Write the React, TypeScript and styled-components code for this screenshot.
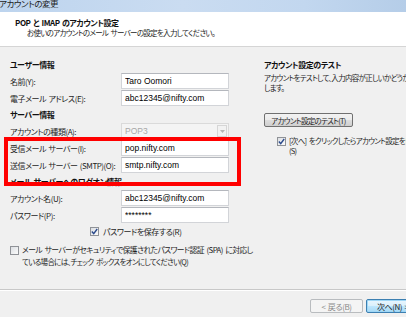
import styled, { createGlobalStyle, css } from 'styled-components';

const GlobalStyle = createGlobalStyle`
  html, body {
    margin: 0;
    padding: 0;
    background: #f0f0f0;
  }
  body {
    font-family: "Noto Sans CJK JP", "Liberation Sans", sans-serif;
  }
`;

// kana-heavy running text is narrower in the original UI font
const narrow = css`
  font-size: 7.5px;
  letter-spacing: -0.7px;
  word-spacing: 1.5px;
`;

const Window = styled.div`
  position: relative;
  width: 406px;
  height: 317px;
  overflow: hidden;
  background: #f0f0f0;
  color: #1e1e1e;
  font-size: 8px;
  letter-spacing: -0.45px;
  word-spacing: 1px;
  font-feature-settings: "palt";
`;

const TitleBar = styled.div`
  height: 12px;
  overflow: hidden;
  background: linear-gradient(to right, #bdd4ee 0%, #cadcf1 45%, #c2d7ef 75%, #b5cde8 100%);
`;

const TitleText = styled.div`
  margin: -3px 0 0 -1px;
  line-height: 12px;
  font-size: 8.5px;
  color: #222;
`;

const Header = styled.div`
  height: 35px;
  padding: 6px 0 0 15px;
  box-sizing: border-box;
  background: #fff;
  border-bottom: 1px solid #d5d5d5;
`;

const HeaderTitle = styled.div`
  font-weight: 700;
  line-height: 10px;
  color: #111;
`;

const HeaderSub = styled.div`
  ${narrow};
  line-height: 9px;
  padding-left: 12px;
  color: #222;
`;

const Body = styled.div`
  display: flex;
  height: 243px;
  padding: 10px 0 0 10px;
  box-sizing: border-box;
  border-bottom: 1px solid #c8c8c8;
`;

const LeftColumn = styled.div`
  width: 219px;
  flex: none;
`;

const RightColumn = styled.div`
  width: 220px;
  flex: none;
  margin-left: 35px;
`;

const SectionTitle = styled.div`
  font-weight: 700;
  line-height: 16px;
  color: #111;
`;

const Row = styled.div`
  display: grid;
  grid-template-columns: 111px 108px;
  align-items: center;
  height: 16px;
  margin-bottom: 1px;
`;

const Label = styled.span`
  white-space: nowrap;
`;

const TextInput = styled.input`
  width: 108px;
  height: 16px;
  box-sizing: border-box;
  margin: 0;
  padding: 0 3px;
  border: 1px solid #d2d4d8;
  border-top-color: #b4b7bd;
  background: #fff;
  font-family: "Liberation Sans", sans-serif;
  font-size: 8.5px;
  letter-spacing: 0;
  word-spacing: 0;
  color: #000;
  outline: none;
`;

const Select = styled.div`
  display: flex;
  align-items: center;
  justify-content: space-between;
  width: 108px;
  height: 16px;
  box-sizing: border-box;
  border: 1px solid #dadada;
  background: #f4f4f4;
  padding: 0 1px 0 3px;
  font-family: "Liberation Sans", sans-serif;
  font-size: 8.5px;
  letter-spacing: 0;
  color: #a8a8a8;
`;

const SelectArrow = styled.span`
  display: flex;
  align-items: center;
  justify-content: center;
  width: 10px;
  height: 12px;
  box-sizing: border-box;
  border: 1px solid #d6d6d6;
  background: #f2f2f2;
`;

const CheckRow = styled.div<{ $indent: number }>`
  display: flex;
  align-items: center;
  gap: 4px;
  height: 14px;
  padding-left: ${(p) => p.$indent}px;
  white-space: nowrap;
`;

const Box = styled.span`
  display: inline-flex;
  align-items: center;
  justify-content: center;
  flex: none;
  width: 9px;
  height: 9px;
  box-sizing: border-box;
  border: 1px solid #8f9297;
  background: linear-gradient(135deg, #dcdfe3, #fbfbfb);
`;

const SpaRow = styled.div`
  display: flex;
  align-items: flex-start;
  gap: 3px;
  margin-top: 6px;
  line-height: 12px;
  white-space: nowrap;
`;

const SpaText = styled.div`
  font-size: 7.8px;
  letter-spacing: -0.6px;
  word-spacing: 1.5px;
`;

const SpaSecond = styled.div`
  ${narrow};
`;

const SpaBox = styled(Box)`
  margin-top: 2px;
`;

const Description = styled.div`
  ${narrow};
  line-height: 10px;
  white-space: nowrap;
`;

const WinButton = styled.button<{ $width: number }>`
  display: flex;
  align-items: center;
  justify-content: center;
  flex: none;
  width: ${(p) => p.$width}px;
  height: 14px;
  padding: 0;
  margin: 0;
  border: 1px solid #707070;
  border-radius: 2px;
  background: linear-gradient(#f2f2f2 0%, #ebebeb 50%, #dddddd 51%, #cfcfcf 100%);
  font-family: "Noto Sans CJK JP", sans-serif;
  font-feature-settings: "palt";
  font-size: 8px;
  letter-spacing: -0.45px;
  word-spacing: 1px;
  color: #1e1e1e;
  white-space: nowrap;
`;

const TestButton = styled(WinButton)`
  ${narrow};
  margin-top: 20px;
`;

const BackButton = styled(WinButton)`
  border-color: #b9bcbf;
  background: #f4f4f4;
  color: #8a8a8a;
`;

const NextButton = styled(WinButton)`
  border-color: #3c7fb1;
  background: linear-gradient(#eaf6fd 0%, #d9f0fc 50%, #bee6fd 51%, #a7d9f5 100%);
  box-shadow: inset 0 0 0 1px #9fd7f6;
  justify-content: flex-start;
  padding-left: 10px;
`;

const AutoTest = styled.div`
  ${narrow};
  display: flex;
  align-items: flex-start;
  gap: 3px;
  margin-top: 9px;
  padding-left: 13px;
  line-height: 10px;
  white-space: nowrap;
`;

const AutoBox = styled(Box)`
  margin-top: 1px;
`;

const Footer = styled.div`
  display: flex;
  gap: 3px;
  padding: 8px 0 0 310px;
  border-top: 1px solid #fff;
`;

const Highlight = styled.div`
  position: absolute;
  left: 4px;
  top: 137px;
  width: 237px;
  height: 49px;
  box-sizing: border-box;
  border: 4px solid #ff0000;
  pointer-events: none;
`;

function CheckMark() {
  return (
    <svg width="7" height="7" viewBox="0 0 7 7">
      <path d="M0.8 3.6 L2.7 5.6 L6.2 1" fill="none" stroke="#2b4a8c" strokeWidth="1.4" />
    </svg>
  );
}

export default function App() {
  return (
    <>
      <GlobalStyle />
      <Window>
        <TitleBar>
          <TitleText>アカウントの変更</TitleText>
        </TitleBar>
        <Header>
          <HeaderTitle>POP と IMAP のアカウント設定</HeaderTitle>
          <HeaderSub>お使いのアカウントのメール サーバーの設定を入力してください。</HeaderSub>
        </Header>
        <Body>
          <LeftColumn>
            <SectionTitle>ユーザー情報</SectionTitle>
            <Row>
              <Label>名前(Y):</Label>
              <TextInput readOnly value="Taro Oomori" />
            </Row>
            <Row>
              <Label>電子メール アドレス(E):</Label>
              <TextInput readOnly value="abc12345@nifty.com" />
            </Row>
            <SectionTitle>サーバー情報</SectionTitle>
            <Row>
              <Label>アカウントの種類(A):</Label>
              <Select>
                POP3
                <SelectArrow>
                  <svg width="5" height="3" viewBox="0 0 5 3">
                    <path d="M0 0 H5 L2.5 3 Z" fill="#b5b5b5" />
                  </svg>
                </SelectArrow>
              </Select>
            </Row>
            <Row>
              <Label>受信メール サーバー(I):</Label>
              <TextInput readOnly value="pop.nifty.com" />
            </Row>
            <Row>
              <Label>送信メール サーバー (SMTP)(O):</Label>
              <TextInput readOnly value="smtp.nifty.com" />
            </Row>
            <SectionTitle>メール サーバーへのログオン情報</SectionTitle>
            <Row>
              <Label>アカウント名(U):</Label>
              <TextInput readOnly value="abc12345@nifty.com" />
            </Row>
            <Row>
              <Label>パスワード(P):</Label>
              <TextInput readOnly value="********" />
            </Row>
            <CheckRow $indent={80}>
              <Box>
                <CheckMark />
              </Box>
              パスワードを保存する(R)
            </CheckRow>
            <SpaRow>
              <SpaBox />
              <div>
                <SpaText>メール サーバーがセキュリティで保護されたパスワード認証 (SPA) に対応し</SpaText>
                <SpaSecond>ている場合には、チェック ボックスをオンにしてください(Q)</SpaSecond>
              </div>
            </SpaRow>
          </LeftColumn>
          <RightColumn>
            <SectionTitle>アカウント設定のテスト</SectionTitle>
            <Description>アカウントをテストして、入力内容が正しいかどうかを確認することをお勧め</Description>
            <Description>します。</Description>
            <TestButton $width={89}>アカウント設定のテスト(T)</TestButton>
            <AutoTest>
              <AutoBox>
                <CheckMark />
              </AutoBox>
              <div>
                <div>[次へ] をクリックしたらアカウント設定を自動的にテストする</div>
                <div>(S)</div>
              </div>
            </AutoTest>
          </RightColumn>
        </Body>
        <Footer>
          <BackButton $width={53} disabled>
            &lt; 戻る(B)
          </BackButton>
          <NextButton $width={53}>次へ(N) &gt;</NextButton>
        </Footer>
        <Highlight />
      </Window>
    </>
  );
}
